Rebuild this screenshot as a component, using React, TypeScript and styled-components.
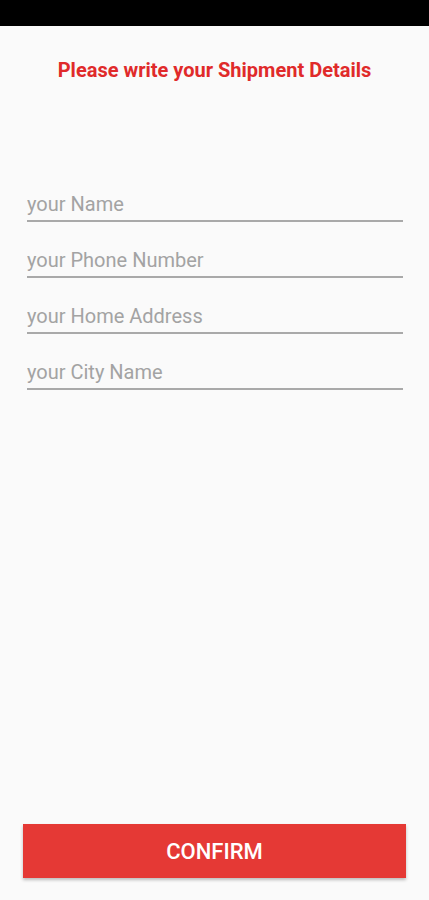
import styled, { createGlobalStyle } from 'styled-components';

const GlobalStyle = createGlobalStyle`
  * { box-sizing: border-box; }
  body {
    margin: 0;
    background: #fafafa;
    font-family: Roboto, "Noto Sans", Arial, sans-serif;
  }
`;

const Screen = styled.div`
  width: 429px;
  height: 900px;
  display: flex;
  flex-direction: column;
  background: #fafafa;
`;

const StatusBar = styled.div`
  height: 26px;
  background: #000;
  flex-shrink: 0;
`;

const Title = styled.h1`
  margin: 32px 0 0;
  font-size: 20px;
  line-height: 24px;
  font-weight: 700;
  color: #e02a2a;
  text-align: center;
`;

const Form = styled.form`
  display: flex;
  flex-direction: column;
  gap: 12px;
  padding: 0 26px 0 27px;
  margin-top: 96px;
`;

const Field = styled.input`
  width: 100%;
  height: 44px;
  border: none;
  border-bottom: 2px solid #a9a9a9;
  background: transparent;
  padding: 9px 0 0 0;
  font-family: Roboto, "Noto Sans", Arial, sans-serif;
  font-size: 20px;
  color: #333;
  outline: none;

  &::placeholder {
    color: #a3a3a3;
  }
`;

const Spacer = styled.div`
  flex: 1;
`;

const ConfirmButton = styled.button`
  margin: 0 23px 22px 23px;
  height: 54px;
  border: none;
  background: #e53935;
  color: #fff;
  font-family: Roboto, "Noto Sans", Arial, sans-serif;
  font-size: 22px;
  font-weight: 500;
  box-shadow: 0 2px 3px rgba(0, 0, 0, 0.25);
  cursor: pointer;
`;

const fields = ['your Name', 'your Phone Number', 'your Home Address', 'your City Name'];

const App = () => {
  return (
    <>
      <GlobalStyle />
      <Screen>
        <StatusBar />
        <Title>Please write your Shipment Details</Title>
        <Form onSubmit={(e) => e.preventDefault()}>
          {fields.map((f) => (
            <Field key={f} placeholder={f} />
          ))}
        </Form>
        <Spacer />
        <ConfirmButton>CONFIRM</ConfirmButton>
      </Screen>
    </>
  );
};

export default App;
